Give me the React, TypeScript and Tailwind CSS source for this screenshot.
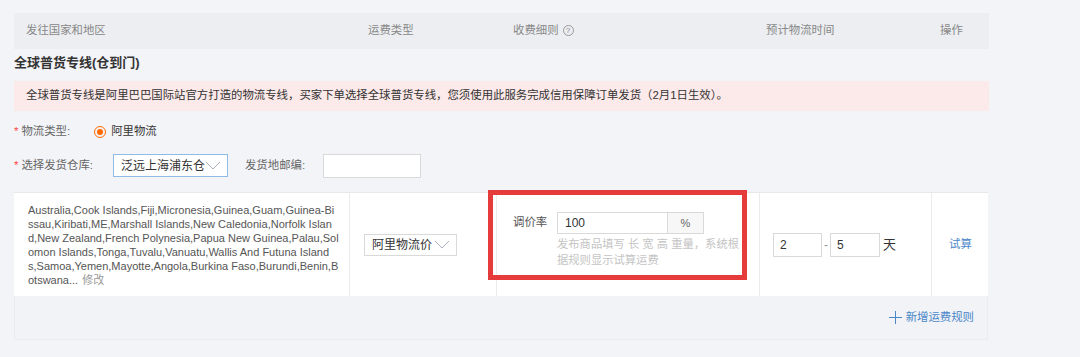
import React from "react";

const Chevron = () => (
  <svg width="16" height="9" viewBox="0 0 16 9">
    <path d="M1 1 L8 8 L15 1" fill="none" stroke="#aab0bb" strokeWidth="1" />
  </svg>
);

// wrapped as in the listing (character wrap)
const countryLines = [
  "Australia,Cook Islands,Fiji,Micronesia,Guinea,Guam,Guinea-Bi",
  "ssau,Kiribati,ME,Marshall Islands,New Caledonia,Norfolk Islan",
  "d,New Zealand,French Polynesia,Papua New Guinea,Palau,Sol",
  "omon Islands,Tonga,Tuvalu,Vanuatu,Wallis And Futuna Island",
  "s,Samoa,Yemen,Mayotte,Angola,Burkina Faso,Burundi,Benin,B",
];

export default function App() {
  const font = { fontFamily: '"Liberation Sans", "Noto Sans CJK SC", sans-serif' };

  return (
    <div className="w-[1080px] h-[357px] bg-[#f3f4f8] overflow-hidden" style={font}>
      <div className="ml-[14px] w-[975px] pt-[13px]">
        {/* Header row */}
        <div className="h-[36px] bg-[#eceef2] grid grid-cols-[336px_147px_263px_172px_1fr] items-center text-[11.4px] text-[#888]">
          <div className="pl-[12px]">发往国家和地区</div>
          <div className="pl-[18px]">运费类型</div>
          <div className="pl-[16px] flex items-center gap-[4px]">
            收费细则
            <span className="inline-flex w-[11px] h-[11px] rounded-full border border-[#999] text-[8px] leading-none items-center justify-center">
              ?
            </span>
          </div>
          <div className="pl-[6px]">预计物流时间</div>
          <div className="pl-[8px]">操作</div>
        </div>

        {/* Title */}
        <div className="mt-[4px] h-[20px] flex items-center text-[13px] font-bold text-[#333]">
          全球普货专线(仓到门)
        </div>

        {/* Alert */}
        <div className="mt-[8px] h-[30px] bg-[#fce9e9] pl-[12px] flex items-center text-[11.4px] text-[#333]">
          全球普货专线是阿里巴巴国际站官方打造的物流专线，买家下单选择全球普货专线，您须使用此服务完成信用保障订单发货（2月1日生效）。
        </div>

        {/* Form */}
        <div className="mt-[11px] h-[20px] flex items-center text-[11.4px] text-[#666]">
          <span className="text-[#f44] mr-[3px]">*</span>
          <span>物流类型:</span>
          <span className="ml-[24px] w-[12px] h-[12px] rounded-full border border-[#ff6a00] flex items-center justify-center">
            <span className="w-[6px] h-[6px] rounded-full bg-[#ff6a00]" />
          </span>
          <span className="ml-[5px] text-[#333]">阿里物流</span>
        </div>

        <div className="mt-[12px] h-[23px] flex items-center text-[11.4px] text-[#666]">
          <span className="text-[#f44] mr-[3px]">*</span>
          <span>选择发货仓库:</span>
          <div className="ml-[20px] w-[115px] h-[23px] border border-[#8fbbe6] bg-white flex items-center justify-between pl-[7px] pr-[6px] text-[12px] text-[#333] whitespace-nowrap">
            泛远上海浦东仓
            <Chevron />
          </div>
          <span className="ml-[17px]">发货地邮编:</span>
          <div className="ml-[18px] w-[98px] h-[24px] border border-[#d9d9d9] bg-white" />
        </div>

        {/* Table */}
        <div className="mt-[15px] w-[974px]">
          <div className="h-[104px] bg-white border-t border-[#e8e8e8] grid grid-cols-[336px_147px_263px_172px_1fr]">
            <div className="border-r border-[#ebebeb] pl-[14px] pt-[10px]">
              <div className="text-[11px] leading-[14px] text-[#555] whitespace-nowrap">
                {countryLines.map((l) => (
                  <div key={l}>{l}</div>
                ))}
                <div>
                  otswana...<span className="ml-[4px] text-[#999]">修改</span>
                </div>
              </div>
            </div>
            <div className="border-r border-[#ebebeb] pl-[14px] flex items-center">
              <div className="w-[93px] h-[22px] border border-[#d9d9d9] flex items-center justify-between pl-[7px] pr-[6px] text-[12px] text-[#333] whitespace-nowrap">
                阿里物流价
                <Chevron />
              </div>
            </div>
            <div className="relative border-r border-[#ebebeb] pl-[16px] pt-[19px]">
              <div className="flex">
                <div className="w-[44px] h-[22px] flex items-center text-[11.4px] text-[#555]">调价率</div>
                <div>
                  <div className="flex h-[22px]">
                    <div className="w-[111px] border border-[#d9d9d9] flex items-center pl-[7px] text-[12px] text-[#333]">
                      100
                    </div>
                    <div className="w-[36px] border border-l-0 border-[#d9d9d9] bg-[#f7f7f7] flex items-center justify-center text-[11px] text-[#666]">
                      %
                    </div>
                  </div>
                  <div className="mt-[2px] w-[190px] text-[11.3px] leading-[16px] text-[#c4c4c4]">
                    发布商品填写 长 宽 高 重量，系统根据规则显示试算运费
                  </div>
                </div>
              </div>
              <div className="absolute left-[-9px] top-[-3px] w-[259px] h-[90px] border-[5px] border-[#e63b3b]" />
            </div>
            <div className="border-r border-[#ebebeb] pl-[13px] flex items-center text-[12px] text-[#333]">
              <div className="w-[49px] h-[24px] border border-[#d9d9d9] flex items-center pl-[6px]">2</div>
              <span className="w-[8px] text-center text-[#999]">-</span>
              <div className="w-[50px] h-[24px] border border-[#d9d9d9] flex items-center pl-[6px]">5</div>
              <span className="ml-[3px] text-[13px]">天</span>
            </div>
            <div className="pl-[17px] flex items-center text-[11.4px] text-[#4a86c8]">试算</div>
          </div>

          <div className="h-[44px] bg-[#f1f3f6] border border-t-0 border-[#eaecf0] flex items-center justify-end pr-[13px] text-[11.4px] text-[#4a86c8]">
            <svg width="13" height="13" viewBox="0 0 13 13" className="mr-[4px]">
              <path d="M6.5 0 V13 M0 6.5 H13" stroke="#4a86c8" strokeWidth="1" />
            </svg>
            新增运费规则
          </div>
        </div>
      </div>
    </div>
  );
}
